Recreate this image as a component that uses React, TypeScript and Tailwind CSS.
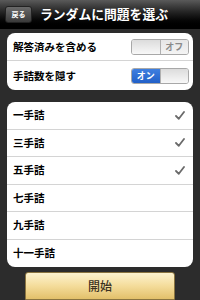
import React from 'react';

const font = { fontFamily: '"Noto Sans CJK JP", "Liberation Sans", sans-serif' };

function Toggle({ on }: { on: boolean }) {
  return (
    <div className="flex h-[16px] w-[58px] overflow-hidden rounded-[3px] border border-[#a8a8a8] text-[9px] font-bold leading-none">
      {on ? (
        <>
          <div className="flex flex-1 items-center justify-center bg-gradient-to-b from-[#3f7fe0] to-[#2160c8] text-white">オン</div>
          <div className="flex-1 border-l border-[#b0b0b0] bg-gradient-to-b from-[#dcdcdc] to-[#f8f8f8]" />
        </>
      ) : (
        <>
          <div className="flex-1 border-r border-[#b0b0b0] bg-gradient-to-b from-[#dcdcdc] to-[#f8f8f8]" />
          <div className="flex flex-1 items-center justify-center bg-gradient-to-b from-[#e6e6e6] to-[#f4f4f4] text-[#8a8a8a]">オフ</div>
        </>
      )}
    </div>
  );
}

function Check() {
  return (
    <svg width="10" height="9" viewBox="0 0 10 9" className="text-[#6a6a6a]">
      <path d="M1 5 L3.8 7.8 L9 1" fill="none" stroke="currentColor" strokeWidth="1.8" strokeLinecap="round" strokeLinejoin="round" />
    </svg>
  );
}

const levels = [
  { label: '一手詰', checked: true },
  { label: '三手詰', checked: true },
  { label: '五手詰', checked: true },
  { label: '七手詰', checked: false },
  { label: '九手詰', checked: false },
  { label: '十一手詰', checked: false },
];

export default function App() {
  return (
    <div className="flex h-[300px] w-[200px] flex-col overflow-hidden bg-[#2c2c2c]" style={font}>
      {/* header bar */}
      <div className="flex h-[29px] shrink-0 items-center gap-[8px] border-b border-black bg-gradient-to-b from-[#5a5a5a] via-[#1c1c1c] to-black px-[5px]">
        <div className="flex h-[17px] w-[27px] items-center justify-center rounded-[3px] border border-[#222] bg-gradient-to-b from-[#6a6a6a] to-[#3a3a3a] text-[7px] font-bold text-white">
          戻る
        </div>
        <div className="text-[12.8px] font-bold leading-none text-white">ランダムに問題を選ぶ</div>
      </div>

      {/* options */}
      <div className="mx-[7px] mt-[4px] rounded-[8px] bg-white">
        <div className="flex h-[28px] items-center justify-between border-b border-[#d4d4d4] pl-[6px] pr-[4px]">
          <span className="text-[10.5px] font-bold text-black">解答済みを含める</span>
          <Toggle on={false} />
        </div>
        <div className="flex h-[29px] items-center justify-between pl-[6px] pr-[4px]">
          <span className="text-[10.5px] font-bold text-black">手詰数を隠す</span>
          <Toggle on />
        </div>
      </div>

      {/* level list */}
      <div className="mx-[7px] mt-[12px] rounded-[8px] bg-white">
        {levels.map((l, i) => (
          <div
            key={l.label}
            className={`flex h-[27.5px] items-center justify-between pl-[6px] pr-[8px] ${i < levels.length - 1 ? 'border-b border-[#d4d4d4]' : ''}`}
          >
            <span className="text-[10.5px] font-bold text-black">{l.label}</span>
            {l.checked && <Check />}
          </div>
        ))}
      </div>

      {/* start button */}
      <div className="mx-auto mt-[5px] flex h-[28px] w-[150px] shrink-0 items-center justify-center rounded-t-[3px] border border-[#8a7440] bg-gradient-to-b from-[#fdf3cf] via-[#f4dc9a] to-[#e2c06a] text-[12px] font-medium text-[#3a3222]">
        開始
      </div>
    </div>
  );
}
